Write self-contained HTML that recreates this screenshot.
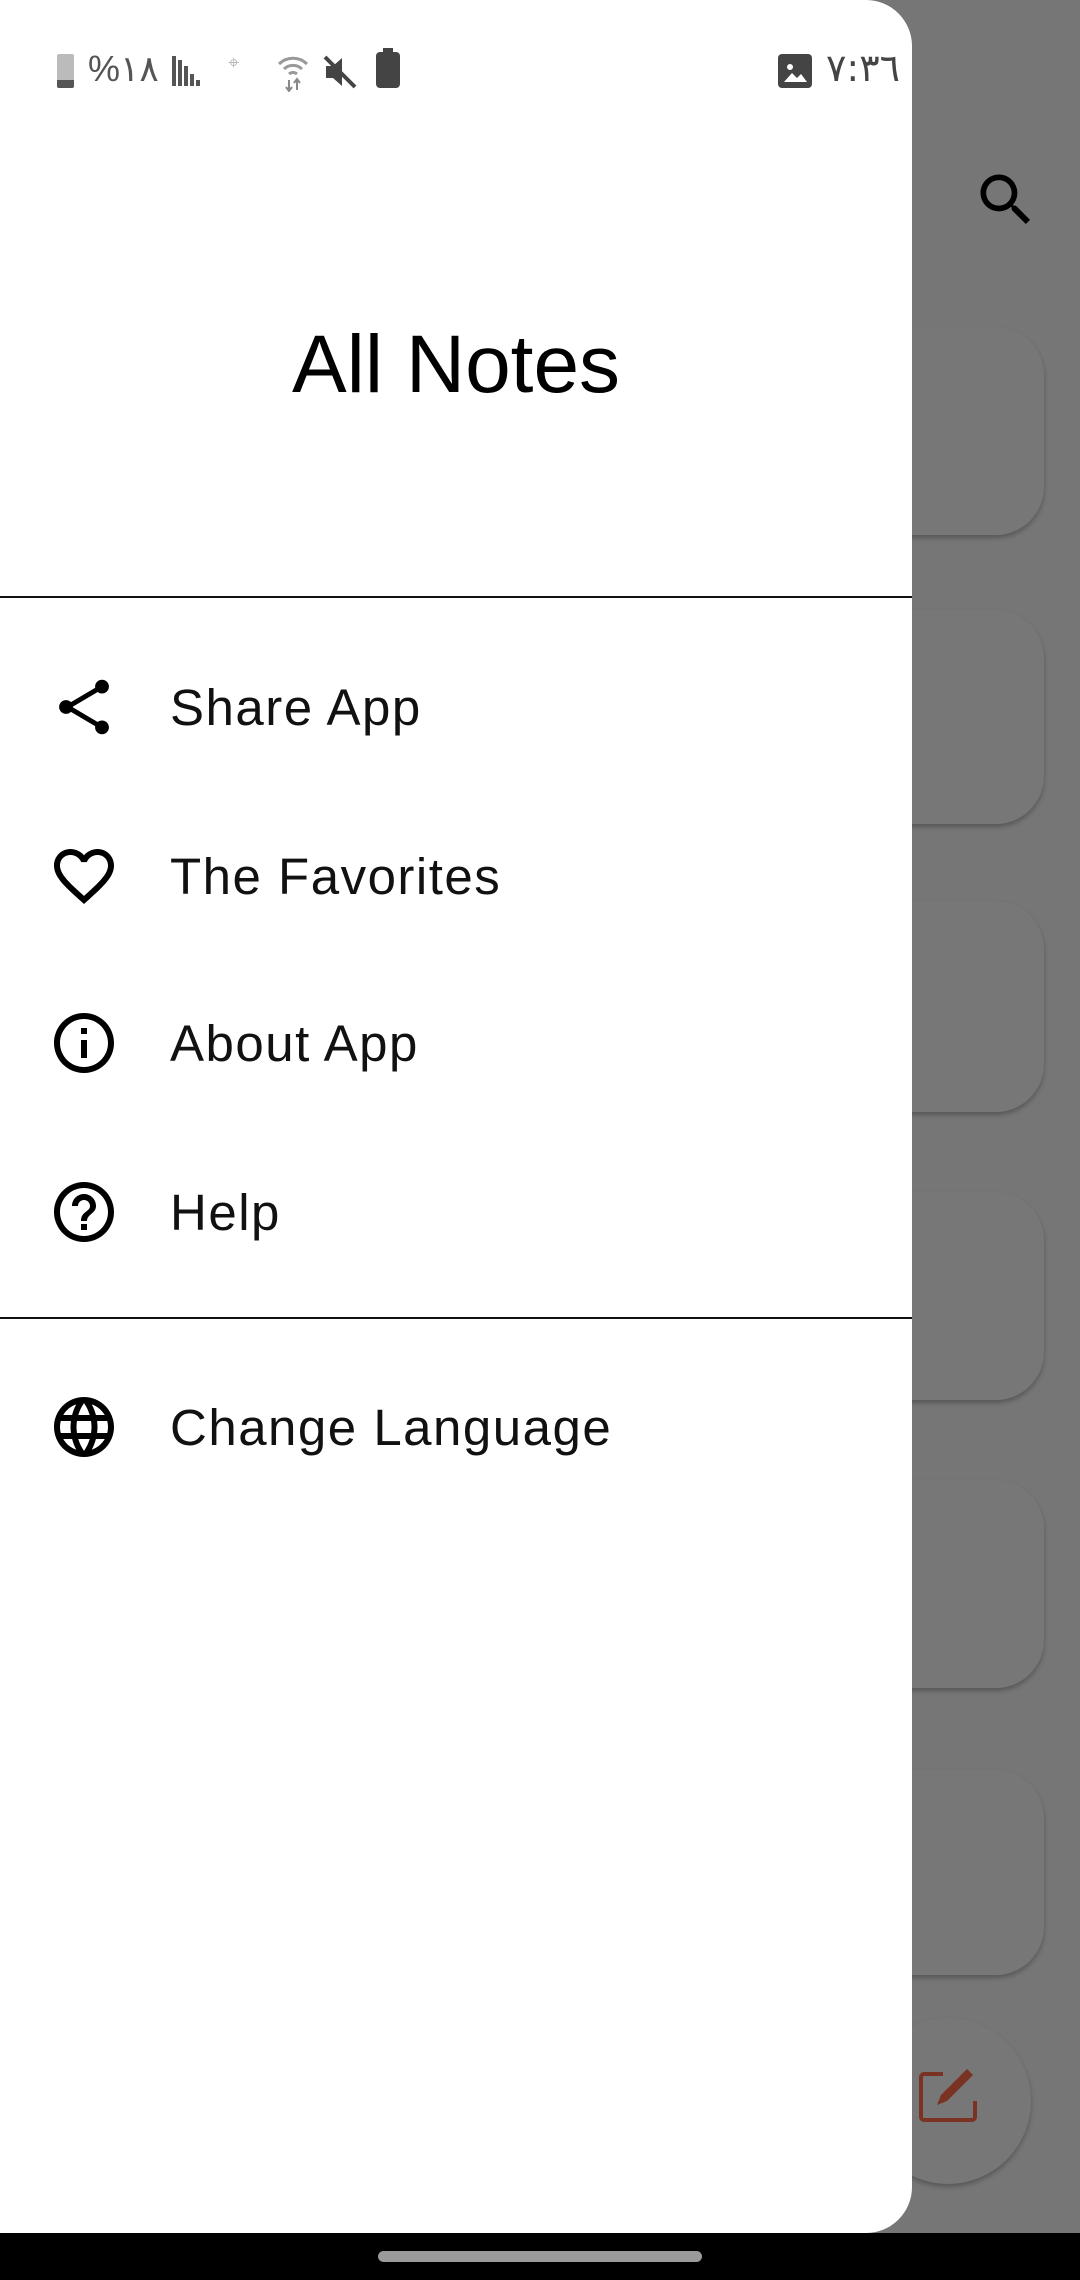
<!DOCTYPE html>
<html><head><meta charset="utf-8"><style>
html,body{margin:0;padding:0;}
body{width:1080px;height:2280px;position:relative;overflow:hidden;background:#767676;font-family:"Liberation Sans",Arial,sans-serif;}
.card{position:absolute;left:860px;width:184px;background:#777;border-radius:48px;box-shadow:0 3px 5px rgba(0,0,0,0.25);}
.drawer{position:absolute;left:0;top:0;width:912px;height:2233px;background:#fff;border-radius:0 46px 46px 0;}
.item{position:absolute;left:170px;font-size:51px;line-height:60px;color:#111;letter-spacing:1.5px;}
.ic{position:absolute;left:48px;width:72px;height:72px;}
.div{position:absolute;left:0;width:912px;height:2px;background:#111;}
.sb{position:absolute;color:#555;}
</style></head><body>
<svg style="position:absolute;left:972px;top:166px" width="68" height="68" viewBox="0 0 24 24"><path fill="#000" d="M15.5 14h-.79l-.28-.27C15.41 12.59 16 11.11 16 9.5 16 5.910 13.09 3 9.5 3S3 5.91 3 9.5 5.91 16 9.5 16c1.61 0 3.09-.59 4.23-1.57l.27.28v.79l5 4.99L20.49 19l-4.99-5zm-6 0C7.01 14 5 11.99 5 9.5S7.01 5 9.5 5 14 7.01 14 9.5 11.99 14 9.5 14z"/></svg>
<div class="card" style="top:327px;height:208px"></div>
<div class="card" style="top:610px;height:214px"></div>
<div class="card" style="top:901px;height:211px"></div>
<div class="card" style="top:1192px;height:208px"></div>
<div class="card" style="top:1480px;height:208px"></div>
<div class="card" style="top:1770px;height:205px"></div>
<div style="position:absolute;left:865px;top:2018px;width:166px;height:166px;border-radius:50%;background:#777;box-shadow:0 3px 5px rgba(0,0,0,0.25)"></div>
<svg style="position:absolute;left:915px;top:2068px" width="66" height="66" viewBox="0 0 66 66"><path d="M28 6H9a3 3 0 0 0-3 3v40a3 3 0 0 0 3 3h48a3 3 0 0 0 3-3V33" fill="none" stroke="#7a3322" stroke-width="4"/><path d="M22 37l4-10 26-26 6 6-26 26z" fill="#7a3322"/></svg>
<div style="position:absolute;left:0;top:2233px;width:1080px;height:47px;background:#000"></div>
<div style="position:absolute;left:378px;top:2251px;width:324px;height:11px;border-radius:6px;background:#9a9a9a"></div>
<div class="drawer"></div>
<div style="position:absolute;left:57px;top:54px;width:17px;height:34px;background:#bbb;border-radius:2px"></div>
<div style="position:absolute;left:57px;top:80px;width:17px;height:8px;background:#555;border-radius:0 0 2px 2px"></div>
<div class="sb" style="left:88px;top:48px;font-size:36px;font-family:'Liberation Sans','DejaVu Sans',sans-serif">%١٨</div>
<div style="position:absolute;left:172px;top:56px;width:4px;height:30px;background:#555"></div>
<div style="position:absolute;left:178px;top:60px;width:4px;height:26px;background:#555"></div>
<div style="position:absolute;left:184px;top:66px;width:4px;height:20px;background:#555"></div>
<div style="position:absolute;left:190px;top:74px;width:4px;height:12px;background:#555"></div>
<div style="position:absolute;left:196px;top:80px;width:4px;height:6px;background:#555"></div>
<div class="sb" style="left:228px;top:52px;font-size:20px;color:#bbb">⌖</div>
<svg style="position:absolute;left:275px;top:52px" width="36" height="40" viewBox="0 0 36 40"><path d="M4 12a20 20 0 0 1 28 0M9 17a13 13 0 0 1 18 0M14 22a6 6 0 0 1 8 0" stroke="#999" stroke-width="3" fill="none"/><path d="M14 28v10M11 35l3 4 3-4M22 38V28M19 31l3-4 3 4" stroke="#888" stroke-width="2" fill="none"/></svg>
<svg style="position:absolute;left:322px;top:54px" width="36" height="36" viewBox="0 0 36 36"><path d="M4 12h7l9-8v28l-9-8H4z" fill="#444"/><path d="M3 3l30 30" stroke="#444" stroke-width="4"/></svg>
<div style="position:absolute;left:376px;top:52px;width:24px;height:36px;background:#444;border-radius:4px"></div>
<div style="position:absolute;left:383px;top:48px;width:10px;height:5px;background:#444"></div>
<div style="position:absolute;left:778px;top:54px;width:34px;height:34px;background:#444;border-radius:4px"></div>
<svg style="position:absolute;left:781px;top:58px" width="28" height="28" viewBox="0 0 28 28"><circle cx="9" cy="9" r="3" fill="#fff"/><path d="M3 24l8-9 5 5 4-4 6 8z" fill="#fff"/></svg>
<div class="sb" style="left:826px;top:46px;font-size:38px;font-family:'DejaVu Sans',sans-serif;color:#444">٧:٣٦</div>
<div style="position:absolute;left:0;width:912px;top:319px;text-align:center;font-size:82px;line-height:92px;color:#000">All Notes</div>
<div class="div" style="top:596px"></div>
<div class="div" style="top:1317px"></div>
<svg class="ic" style="top:671px" viewBox="0 0 24 24"><path d="M6.5 12L17.5 5.5M6.5 12L17.5 18.5" stroke="#000" stroke-width="1.6" fill="none"/><circle cx="6" cy="12" r="2.3"/><circle cx="18" cy="5.2" r="2.3"/><circle cx="18" cy="18.8" r="2.3"/></svg>
<div class="item" style="top:678px">Share App</div>
<svg class="ic" style="top:840px" viewBox="0 0 24 24"><path d="M16.5 3c-1.74 0-3.41.81-4.5 2.09C10.91 3.81 9.24 3 7.5 3 4.42 3 2 5.42 2 8.5c0 3.78 3.4 6.86 8.55 11.54L12 21.35l1.45-1.32C18.6 15.36 22 12.28 22 8.5 22 5.42 19.58 3 16.5 3zm-4.4 15.55l-.1.1-.1-.1C7.14 14.24 4 11.39 4 8.5 4 6.5 5.5 5 7.5 5c1.54 0 3.04.99 3.57 2.36h1.87C13.46 5.99 14.96 5 16.5 5c2 0 3.5 1.5 3.5 3.5 0 2.89-3.14 5.74-7.9 10.05z"/></svg>
<div class="item" style="top:847px">The Favorites</div>
<svg class="ic" style="top:1007px" viewBox="0 0 24 24"><path d="M11 7h2v2h-2zm0 4h2v6h-2zm1-9C6.48 2 2 6.48 2 12s4.48 10 10 10 10-4.48 10-10S17.52 2 12 2zm0 18c-4.41 0-8-3.59-8-8s3.59-8 8-8 8 3.59 8 8-3.59 8-8 8z"/></svg>
<div class="item" style="top:1014px">About App</div>
<svg class="ic" style="top:1176px" viewBox="0 0 24 24"><path d="M11 18h2v-2h-2v2zm1-16C6.48 2 2 6.48 2 12s4.48 10 10 10 10-4.48 10-10S17.52 2 12 2zm0 18c-4.41 0-8-3.59-8-8s3.59-8 8-8 8 3.59 8 8-3.59 8-8 8zm0-14c-2.21 0-4 1.79-4 4h2c0-1.1.9-2 2-2s2 .9 2 2c0 2-3 1.75-3 5h2c0-2.25 3-2.5 3-5 0-2.21-1.79-4-4-4z"/></svg>
<div class="item" style="top:1183px">Help</div>
<svg class="ic" style="top:1391px" viewBox="0 0 24 24"><path d="M11.99 2C6.47 2 2 6.48 2 12s4.47 10 9.99 10C17.52 22 22 17.52 22 12S17.52 2 11.99 2zm6.93 6h-2.95c-.32-1.25-.78-2.45-1.38-3.56 1.84.63 3.37 1.91 4.33 3.56zM12 4.04c.83 1.2 1.48 2.53 1.91 3.96h-3.82c.43-1.43 1.08-2.76 1.91-3.96zM4.26 14C4.1 13.36 4 12.69 4 12s.1-1.36.26-2h3.38c-.08.66-.14 1.32-.14 2 0 .68.06 1.34.14 2H4.26zm.82 2h2.95c.32 1.25.78 2.45 1.38 3.56-1.84-.63-3.37-1.9-4.33-3.56zm2.95-8H5.08c.96-1.66 2.49-2.93 4.33-3.56C8.81 5.55 8.35 6.75 8.03 8zM12 19.96c-.83-1.2-1.48-2.53-1.91-3.96h3.82c-.43 1.43-1.08 2.76-1.91 3.96zM14.34 14H9.66c-.09-.66-.16-1.32-.16-2 0-.68.07-1.35.16-2h4.68c.09.65.16 1.32.16 2 0 .68-.07 1.34-.16 2zm.25 5.56c.6-1.11 1.06-2.31 1.38-3.56h2.95c-.96 1.65-2.49 2.93-4.33 3.56zM16.36 14c.08-.66.14-1.32.14-2 0-.68-.06-1.34-.14-2h3.38c.16.64.26 1.31.26 2s-.1 1.36-.26 2h-3.38z"/></svg>
<div class="item" style="top:1398px">Change Language</div>
</body></html>
